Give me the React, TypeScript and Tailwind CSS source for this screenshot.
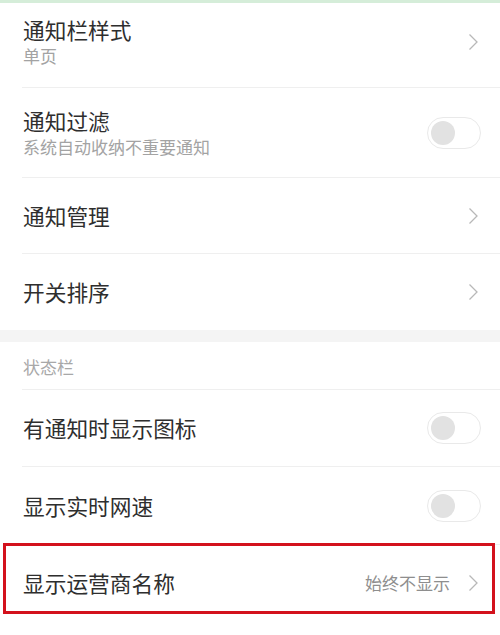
import React from 'react';

const font = { fontFamily: '"Noto Sans CJK SC", "Noto Sans", sans-serif' };

const Chevron = () => (
  <svg width="11" height="18" viewBox="0 0 11 18" className="mr-[2px] shrink-0">
    <path d="M1.5 1.5 L9 9 L1.5 16.5" fill="none" stroke="#b8b8b8" strokeWidth="1.3" />
  </svg>
);

const Toggle = () => (
  <div className="flex h-[32px] w-[54px] items-center rounded-full border border-[#e9e9e9] bg-white pl-[3px]">
    <div className="h-[24px] w-[24px] rounded-full bg-[#e2e2e2]" />
  </div>
);

const Title = ({ children }: { children: React.ReactNode }) => (
  <div className="text-[21.7px] leading-[26px] text-[#2e2e2e]">{children}</div>
);

const Sub = ({ children }: { children: React.ReactNode }) => (
  <div className="mt-[2px] text-[17px] leading-[22px] text-[#a3a3a3]">{children}</div>
);

export default function App() {
  return (
    <div className="min-h-[635px] w-[500px] bg-white" style={font}>
      <div className="h-[3px] bg-[#d5edd9]" />

      {/* 通知栏 */}
      <div className="pl-[22px]">
        <div className="flex h-[85px] items-center justify-between border-b border-[#efefef] pb-[7px] pr-[19px]">
          <div className="pl-[1px]">
            <Title>通知栏样式</Title>
            <Sub>单页</Sub>
          </div>
          <Chevron />
        </div>
        <div className="flex h-[90px] items-center justify-between border-b border-[#efefef] pr-[19px]">
          <div className="pl-[1px]">
            <Title>通知过滤</Title>
            <Sub>系统自动收纳不重要通知</Sub>
          </div>
          <Toggle />
        </div>
        <div className="flex h-[76px] items-center justify-between border-b border-[#efefef] pr-[19px]">
          <div className="pl-[1px]">
            <Title>通知管理</Title>
          </div>
          <Chevron />
        </div>
        <div className="flex h-[76px] items-center justify-between pr-[19px]">
          <div className="pl-[1px]">
            <Title>开关排序</Title>
          </div>
          <Chevron />
        </div>
      </div>

      <div className="h-[12px] bg-[#f4f4f4]" />

      {/* 状态栏 */}
      <div className="pl-[22px]">
        <div className="flex h-[48px] items-center border-b border-[#efefef] pt-[3px] pl-[1px] text-[17px] text-[#a8a8a8]">
          状态栏
        </div>
        <div className="flex h-[77px] items-center justify-between border-b border-[#efefef] pr-[19px]">
          <div className="pl-[1px]">
            <Title>有通知时显示图标</Title>
          </div>
          <Toggle />
        </div>
        <div className="flex h-[78px] items-center justify-between border-b border-[#efefef] pr-[19px]">
          <div className="pl-[1px]">
            <Title>显示实时网速</Title>
          </div>
          <Toggle />
        </div>
      </div>

      <div className="relative pl-[22px]">
        <div className="flex h-[75px] items-center justify-between pr-[19px]">
          <div className="pl-[1px]">
            <Title>显示运营商名称</Title>
          </div>
          <div className="flex items-center gap-[18px]">
            <span className="text-[17px] text-[#8e8e8e]">始终不显示</span>
            <Chevron />
          </div>
        </div>
        {/* annotation box */}
        <div className="absolute left-[3px] right-[5px] top-[-2px] h-[71px] border-[3px] border-[#d3111c]" />
      </div>
    </div>
  );
}
